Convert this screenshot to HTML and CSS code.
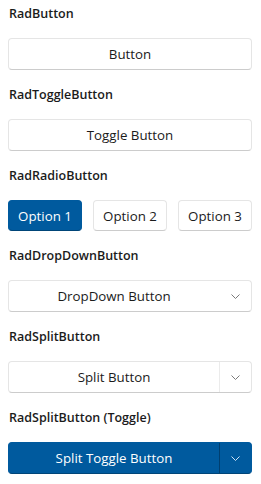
FILE: index.html
```html
<!DOCTYPE html>
<html>
<head>
<meta charset="utf-8">
<link rel="stylesheet" href="styles.css">
</head>
<body>
<div class="page">
  <section class="sec">
    <div class="hdr">RadButton</div>
    <div class="btn">Button</div>
  </section>
  <section class="sec">
    <div class="hdr">RadToggleButton</div>
    <div class="btn">Toggle Button</div>
  </section>
  <section class="sec">
    <div class="hdr">RadRadioButton</div>
    <div class="radios">
      <div class="btn radio active">Option 1</div>
      <div class="btn radio">Option 2</div>
      <div class="btn radio">Option 3</div>
    </div>
  </section>
  <section class="sec">
    <div class="hdr">RadDropDownButton</div>
    <div class="btn split dd">
      <span class="split-main">DropDown Button</span>
      <span class="split-arrow"><svg class="chev" width="9" height="5" viewBox="0 0 9 5"><path d="M0.5 0.5 L4.5 4.5 L8.5 0.5" fill="none" stroke="currentColor" stroke-width="1"/></svg></span>
    </div>
  </section>
  <section class="sec">
    <div class="hdr">RadSplitButton</div>
    <div class="btn split">
      <span class="split-main">Split Button</span>
      <span class="split-arrow"><svg class="chev" width="9" height="5" viewBox="0 0 9 5"><path d="M0.5 0.5 L4.5 4.5 L8.5 0.5" fill="none" stroke="currentColor" stroke-width="1"/></svg></span>
    </div>
  </section>
  <section class="sec">
    <div class="hdr">RadSplitButton (Toggle)</div>
    <div class="btn split active">
      <span class="split-main">Split Toggle Button</span>
      <span class="split-arrow"><svg class="chev" width="9" height="5" viewBox="0 0 9 5"><path d="M0.5 0.5 L4.5 4.5 L8.5 0.5" fill="none" stroke="currentColor" stroke-width="1"/></svg></span>
    </div>
  </section>
</div>
</body>
</html>
```
FILE: styles.css
```css
html, body {
  margin: 0;
  padding: 0;
  background: #ffffff;
}
body {
  font-family: "Open Sans", "Noto Sans", sans-serif;
  color: #1b1b1b;
  width: 261px;
}
.page {
  padding: 4px 9px 0 8px;
  display: flex;
  flex-direction: column;
}
.sec {
  display: flex;
  flex-direction: column;
  gap: 14px;
  margin-bottom: 15px;
}
.hdr {
  font-size: 12.5px;
  font-weight: 600;
  line-height: 20px;
  padding-left: 1px;
  color: #1b1b1b;
}
.btn {
  box-sizing: border-box;
  height: 32px;
  border: 1px solid #e5e5e5;
  border-bottom-color: #cccccc;
  border-radius: 4px;
  background: #ffffff;
  font-size: 13.3px;
  display: flex;
  align-items: center;
  justify-content: center;
  color: #1b1b1b;
}
.radios {
  display: flex;
  gap: 11px;
}
.radio {
  flex: 1;
  height: 31px;
}
.btn.active {
  background: #005a9e;
  border-color: #005a9e;
  border-bottom-color: #004578;
  color: #ffffff;
}
.split {
  justify-content: stretch;
  align-items: stretch;
}
.split-main {
  flex: 1;
  display: flex;
  align-items: center;
  justify-content: center;
}
.split-arrow {
  width: 31px;
  border-left: 1px solid #ebebeb;
  display: flex;
  align-items: center;
  justify-content: center;
  color: #7a7a7a;
}
.dd .split-arrow {
  border-left-color: transparent;
}
.split.active .split-arrow {
  border-left-color: #003f70;
  color: #cfe3f5;
}
```
